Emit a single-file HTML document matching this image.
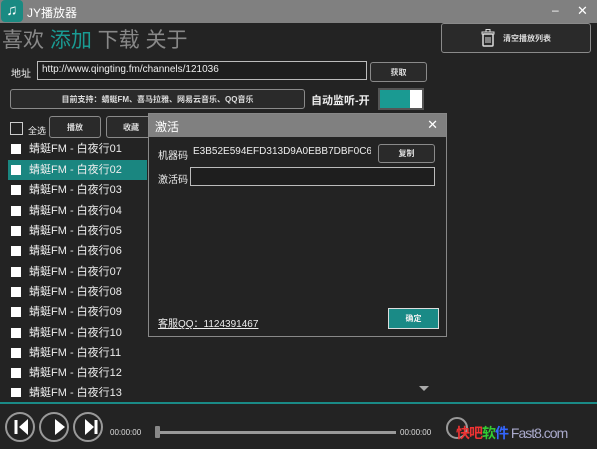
<!DOCTYPE html>
<html><head><meta charset="utf-8"><style>
*{margin:0;padding:0;box-sizing:border-box}
body{width:600px;height:449px;background:#fff;position:relative;overflow:hidden;font-family:"Liberation Sans","Noto Sans CJK SC",sans-serif;color:#eee}
.win{position:absolute;left:0;top:0;width:597px;height:449px;background:#232323}
.tb{position:absolute;left:0;top:0;width:597px;height:23px;background:#808080}
.a{position:absolute}
.btn{position:absolute;border:1px solid #8a8a8a;border-radius:3px;background:#2a2a2a;color:#ddd;font-size:8px;font-weight:bold;display:flex;align-items:center;justify-content:center}
.inp{position:absolute;border:1px solid #bbb;background:#1e1e1e;font-size:10px;color:#eee;padding-left:4px;line-height:16px}
.row{position:absolute;left:8px;width:139px;height:20px;font-size:11px;line-height:20px}
.row i{position:absolute;left:3px;top:5px;width:10px;height:10px;background:#fff}
.row span{position:absolute;left:21px}
.cb{position:absolute;width:13px;height:13px;border:1px solid #ccc}
.circ{position:absolute;width:30px;height:30px;border:2px solid #999;border-radius:50%}
</style></head><body>
<div class="win">
<div class="tb"></div>
<div class="a" style="left:1px;top:0;width:22px;height:22px;background:#1a8a82;border-radius:4px;color:#fff;font-size:15px;text-align:center;line-height:22px">♫</div>
<div class="a" style="left:27px;top:4px;font-size:12px;color:#fff">JY播放器</div>
<div class="a" style="left:552px;top:3px;font-size:12px;color:#fff">–</div>
<div class="a" style="left:577px;top:3px;font-size:13px;color:#fff">✕</div>
<div class="a" style="left:2px;top:24px;font-size:21px;color:#888;letter-spacing:0">喜欢 <span style="color:#1a9a92">添加</span> 下载 关于</div>
<div class="btn" style="left:441px;top:23px;width:150px;height:30px;font-size:8px"><svg width="14" height="18" viewBox="0 0 14 18" style="margin-right:8px"><rect x="1" y="3" width="12" height="2" fill="none" stroke="#ddd"/><rect x="5" y="0.5" width="4" height="2.5" fill="none" stroke="#ddd"/><rect x="2" y="5" width="10" height="12" rx="1" fill="none" stroke="#ddd" stroke-width="1.5"/><path d="M5 8v6M7 8v6M9 8v6" stroke="#ddd"/></svg>清空播放列表</div>
<div class="a" style="left:11px;top:65px;font-size:10px">地址</div>
<div class="inp" style="left:37px;top:61px;width:330px;height:19px">http://www.qingting.fm/channels/121036</div>
<div class="btn" style="left:370px;top:62px;width:57px;height:20px">获取</div>
<div class="btn" style="left:10px;top:89px;width:295px;height:20px">目前支持：蜻蜓FM、喜马拉雅、网易云音乐、QQ音乐</div>
<div class="a" style="left:311px;top:92px;font-size:11px;font-weight:bold;color:#eee">自动监听-开</div>
<div class="a" style="left:378px;top:88px;width:46px;height:22px;background:#fff;border:2px solid #555"><div style="width:30px;height:18px;background:#1a9a92"></div></div>
<div class="cb" style="left:10px;top:122px"></div>
<div class="a" style="left:28px;top:124px;font-size:9px">全选</div>
<div class="btn" style="left:49px;top:116px;width:52px;height:22px">播放</div>
<div class="btn" style="left:106px;top:116px;width:50px;height:22px">收藏</div>
<div class="row" style="top:139px"><i></i><span>蜻蜓FM - 白夜行01</span></div>
<div class="row" style="top:160px;background:#1a8680"><i></i><span>蜻蜓FM - 白夜行02</span></div>
<div class="row" style="top:180px"><i></i><span>蜻蜓FM - 白夜行03</span></div>
<div class="row" style="top:201px"><i></i><span>蜻蜓FM - 白夜行04</span></div>
<div class="row" style="top:221px"><i></i><span>蜻蜓FM - 白夜行05</span></div>
<div class="row" style="top:241px"><i></i><span>蜻蜓FM - 白夜行06</span></div>
<div class="row" style="top:262px"><i></i><span>蜻蜓FM - 白夜行07</span></div>
<div class="row" style="top:282px"><i></i><span>蜻蜓FM - 白夜行08</span></div>
<div class="row" style="top:302px"><i></i><span>蜻蜓FM - 白夜行09</span></div>
<div class="row" style="top:323px"><i></i><span>蜻蜓FM - 白夜行10</span></div>
<div class="row" style="top:343px"><i></i><span>蜻蜓FM - 白夜行11</span></div>
<div class="row" style="top:363px"><i></i><span>蜻蜓FM - 白夜行12</span></div>
<div class="row" style="top:383px;height:14px;overflow:hidden"><i></i><span>蜻蜓FM - 白夜行13</span></div>
<div class="a" style="left:419px;top:386px;width:0;height:0;border-left:5px solid transparent;border-right:5px solid transparent;border-top:5px solid #aaa"></div>
<div class="a" style="left:0;top:402px;width:597px;height:2px;background:#1a8a86"></div>
<div class="circ" style="left:5px;top:412px"></div>
<div class="circ" style="left:39px;top:412px"></div>
<div class="circ" style="left:73px;top:412px"></div>
<svg class="a" style="left:5px;top:412px" width="100" height="30"><path d="M11 8v14" stroke="#fff" stroke-width="3"/><path d="M23 7L14 15 23 23z" fill="#fff"/><path d="M50 7l10 8-10 8z" fill="#fff"/><path d="M80 7l9 8-9 8z" fill="#fff"/><path d="M91 8v14" stroke="#fff" stroke-width="3"/></svg>
<div class="a" style="left:110px;top:428px;font-size:8px;color:#ddd">00:00:00</div>
<div class="a" style="left:160px;top:431px;width:236px;height:3px;background:#999"></div>
<div class="a" style="left:155px;top:426px;width:5px;height:12px;background:#888;border-radius:1px"></div>
<div class="a" style="left:400px;top:428px;font-size:8px;color:#ddd">00:00:00</div>
<div class="a" style="left:446px;top:417px;width:22px;height:22px;border:2px solid #999;border-radius:50%"></div>
<div class="a" style="left:456px;top:423px;font-size:14px;font-weight:bold;color:#e33;letter-spacing:-1px">快吧<span style="color:#3c3">软</span><span style="color:#36f">件</span> <span style="color:#aac;font-weight:normal">Fast8.com</span></div>
<!-- dialog -->
<div class="a" style="left:148px;top:113px;width:299px;height:224px;background:#232323;border:1px solid #888">
<div style="height:23px;background:#808080;font-size:12px;color:#fff;padding:4px 0 0 6px">激活<span style="position:absolute;right:8px;top:3px;font-size:13px">✕</span></div>
</div>
<div class="a" style="left:158px;top:147px;font-size:10px">机器码</div>
<div class="a" style="left:193px;top:146px;font-size:10px;width:178px;overflow:hidden;white-space:nowrap">E3B52E594EFD313D9A0EBB7DBF0C6825D</div>
<div class="btn" style="left:378px;top:144px;width:57px;height:19px">复制</div>
<div class="a" style="left:158px;top:171px;font-size:10px">激活码</div>
<div class="inp" style="left:190px;top:167px;width:245px;height:19px"></div>
<div class="a" style="left:158px;top:315px;font-size:10px;text-decoration:underline">客服QQ：1124391467</div>
<div class="a" style="left:388px;top:308px;width:51px;height:21px;background:#1a8a86;border:1px solid #ddd;font-size:8px;font-weight:bold;display:flex;align-items:center;justify-content:center">确定</div>
</div>
</body></html>
